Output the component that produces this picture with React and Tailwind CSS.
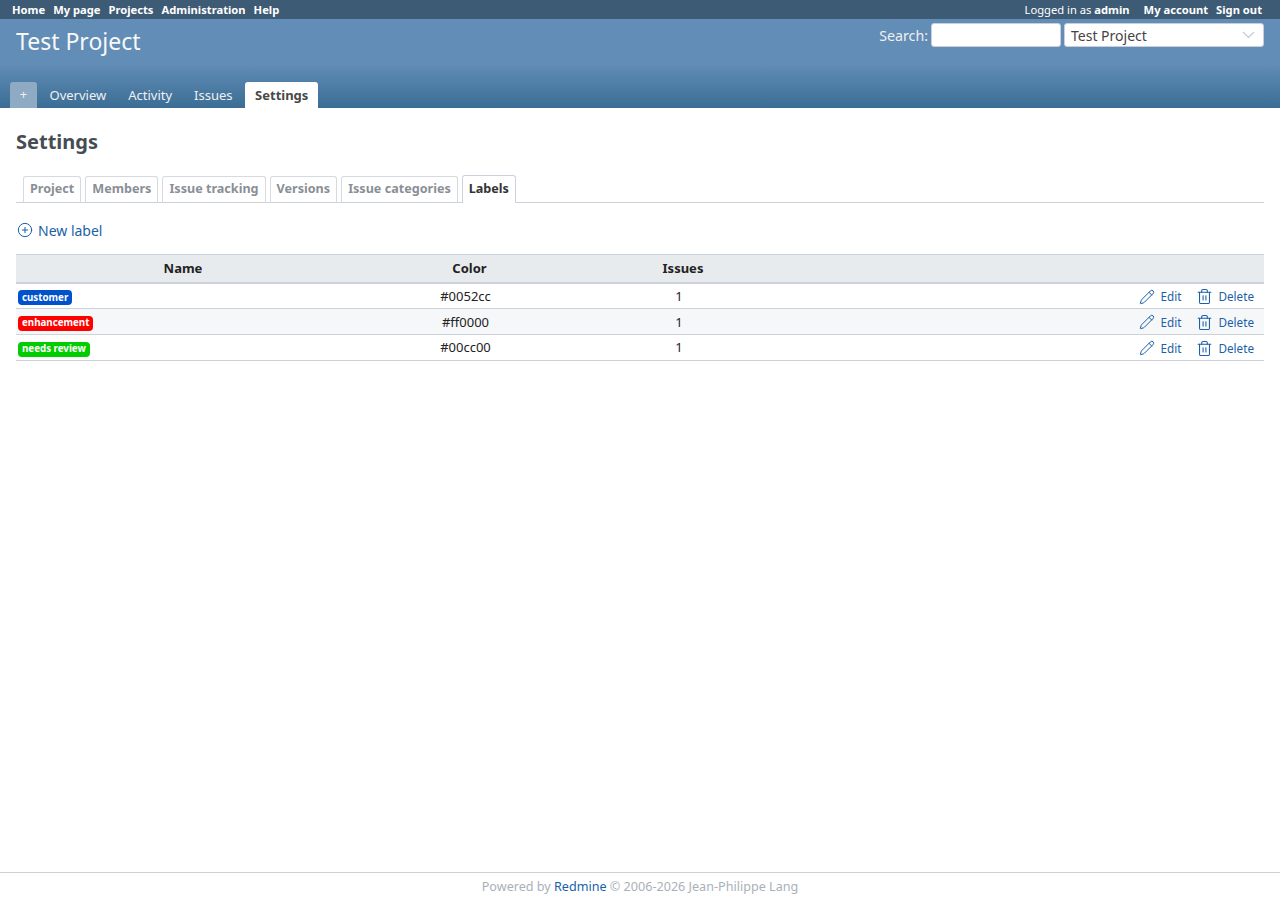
import { CirclePlus, Pencil, Trash2 } from 'lucide-react';

const topLeft = ['Home', 'My page', 'Projects', 'Administration', 'Help'];
const mainTabs = ['Overview', 'Activity', 'Issues'];
const settingsTabs = ['Project', 'Members', 'Issue tracking', 'Versions', 'Issue categories'];
const labels = [
  { name: 'customer', color: '#0052cc', badge: 'bg-[#0052cc]' },
  { name: 'enhancement', color: '#ff0000', badge: 'bg-[#ff0000]' },
  { name: 'needs review', color: '#00cc00', badge: 'bg-[#00cc00]' },
];

const App = () => {
  return (
    <div className="min-h-[900px] flex flex-col bg-white text-[13px] text-[#333] font-['Noto_Sans',sans-serif]">
      <div className="h-[19px] pt-[2px] bg-[#3e5b76] flex items-center justify-between pl-3 pr-[18px] text-[11.2px] text-white">
        <div className="flex gap-2 font-bold">
          {topLeft.map((item) => (
            <span key={item}>{item}</span>
          ))}
        </div>
        <div className="flex items-center">
          <span className="mr-[14px]">
            Logged in as <b>admin</b>
          </span>
          <b className="mr-2">My account</b>
          <b>Sign out</b>
        </div>
      </div>

      <header className="h-[89px] bg-[linear-gradient(#628db6_0%,#628db6_50%,#3a6d95_100%)] flex flex-col justify-between">
        <div className="flex justify-between pl-4 pr-4">
          <h1 className="text-[23px] leading-[32px] mt-[6px] text-[#f8f8f8]">Test Project</h1>
          <div className="flex items-center h-[24px] mt-1 text-[14.2px] text-[#f0f0f0]">
            <span className="mr-[3px] pt-[2px]">Search:</span>
            <div className="w-[130px] h-[24px] bg-white border border-[#ccd] rounded-[3px] mr-[3px]"></div>
            <div className="w-[200px] h-[24px] bg-white border border-[#ccd] rounded-[3px] flex items-center justify-between pl-[6px] pr-[8px] text-[14px] text-[#444]">
              <span>Test Project</span>
              <svg width="13" height="8" viewBox="0 0 13 8" fill="none" stroke="#c4c9d4" strokeWidth="1.2">
                <path d="M1 1l5.5 5.5 5.5-5.5" />
              </svg>
            </div>
          </div>
        </div>
        <div className="flex items-end pl-[10px] h-[26px]">
          <div className="w-[27px] h-[26px] bg-[#8fabc4] rounded-t-[3px] text-[#eee] flex items-center justify-center text-[13px] mr-[2px]">
            +
          </div>
          {mainTabs.map((tab) => (
            <div key={tab} className="h-[26px] pt-[2px] px-[10.5px] mr-px flex items-center text-[#f0f0f0]">
              {tab}
            </div>
          ))}
          <div className="h-[26px] pt-[2px] px-[10px] ml-[1px] bg-white rounded-t-[3px] flex items-center font-bold text-[#484848]">
            Settings
          </div>
        </div>
      </header>

      <main className="flex-1 px-4">
        <h2 className="text-[20px] leading-[28px] font-bold text-[#464c54] mt-5">Settings</h2>

        <div className="flex items-end gap-1 mt-5 pl-[7px] border-b border-[#ccd2da] h-[27px]">
          {settingsTabs.map((tab) => (
            <div
              key={tab}
              className="h-[27px] -mb-px px-[6px] flex items-center bg-white border border-b-[#ccd2da] border-[#d5d9e0] rounded-t-[3px] text-[12.6px] font-bold text-[#8a8f96]"
            >
              {tab}
            </div>
          ))}
          <div className="h-[28px] pb-px -mb-px px-[6px] flex items-center bg-white border border-b-0 border-[#ccd2da] rounded-t-[3px] text-[12.6px] font-bold text-[#333]">
            Labels
          </div>
        </div>

        <div className="flex items-center mt-[17px] h-[20px] text-[14px] text-[#1a5fa8]">
          <CirclePlus className="w-4 h-4 ml-px mr-[5px]" strokeWidth={1.5} />
          New label
        </div>

        <table className="w-full table-fixed mt-[14px] border-collapse text-[13px] text-[#222]">
          <colgroup>
            <col className="w-[326px]" />
            <col className="w-[247px]" />
            <col className="w-[180px]" />
            <col />
          </colgroup>
          <thead>
            <tr className="h-[28px] bg-[#e8ebee] border-t border-t-[#ccd2da] border-b-2 border-b-[#ccd2da]">
              <th className="pl-2 pt-[1px] font-bold">Name</th>
              <th className="pl-2 pt-[1px] font-bold">Color</th>
              <th className="pl-2 pt-[1px] font-bold">Issues</th>
              <th></th>
            </tr>
          </thead>
          <tbody>
            {labels.map((label, i) => (
              <tr
                key={label.name}
                className={`h-[26px] border-b border-[#ccd2da] ${i % 2 === 1 ? 'bg-[#f6f7f9]' : 'bg-white'}`}
              >
                <td className="pl-[2px] pt-[2px]">
                  <span
                    className={`inline-flex items-center h-[15px] pt-px px-1 rounded-[4px] text-[9.75px] font-bold text-white align-middle ${label.badge}`}
                  >
                    {label.name}
                  </span>
                </td>
                <td className={`text-center ${i === 2 ? 'pt-0' : 'pt-[2px]'}`}>{label.color}</td>
                <td className={`text-center ${i === 2 ? 'pt-0' : 'pt-[2px]'}`}>1</td>
                <td className="pt-[2px]">
                  <div className="flex justify-end items-center pr-[10px] text-[11.7px] text-[#1a5fa8]">
                    <Pencil className="w-4 h-4 mr-[6px]" strokeWidth={1.5} />
                    <span className="mr-[15px]">Edit</span>
                    <Trash2 className="w-[17px] h-[17px] mr-[5px]" strokeWidth={1.5} />
                    <span>Delete</span>
                  </div>
                </td>
              </tr>
            ))}
          </tbody>
        </table>
      </main>

      <footer className="h-[28px] pt-[2px] border-t border-[#ccd2da] flex items-center justify-center text-[12.6px] text-[#a9b0ba]">
        <span>
          Powered by <span className="text-[#1a5fa8]">Redmine</span> © 2006-2026 Jean-Philippe Lang
        </span>
      </footer>
    </div>
  );
};

export default App;
